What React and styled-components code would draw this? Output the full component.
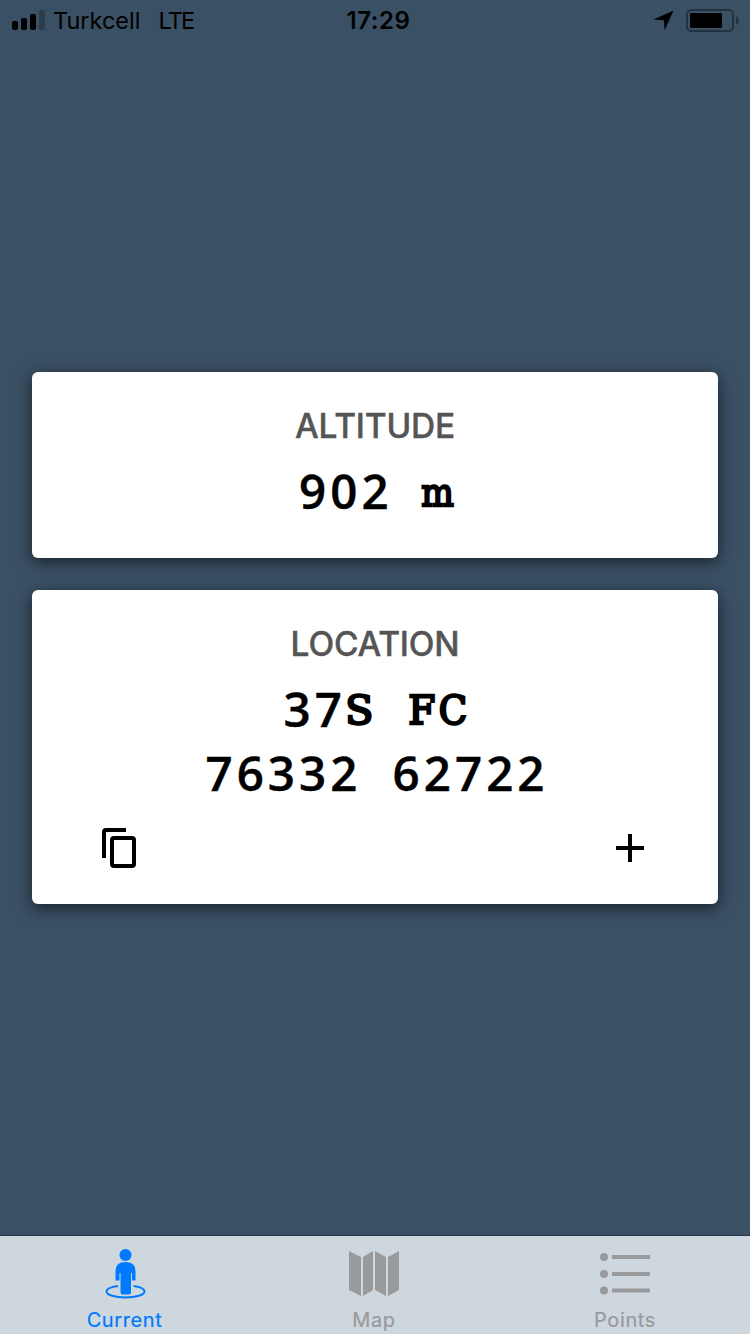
import React from "react";
import styled, { createGlobalStyle } from "styled-components";

const GlobalStyle = createGlobalStyle`
  *, *::before, *::after { box-sizing: border-box; }
  body { margin: 0; background: #3a5064; }
`;

const Screen = styled.div`
  display: flex;
  flex-direction: column;
  width: 750px;
  height: 1334px;
  overflow: hidden;
  background: #3a5064;
  font-family: Inter, "Liberation Sans", sans-serif;
  color: #000;
`;

const StatusBar = styled.header`
  display: grid;
  grid-template-columns: 1fr auto 1fr;
  align-items: center;
  height: 40px;
  padding: 0 11px 0 12px;
  font-size: 24px;
  line-height: 36px;
`;

const StatusGroup = styled.div`
  display: flex;
  align-items: center;
  justify-content: ${(p) => (p.$end ? "flex-end" : "flex-start")};
  gap: ${(p) => p.$gap};
  height: 40px;
`;

const StatusText = styled.span`
  padding-top: 2px;
  font-size: 23.5px;
  font-weight: 400;
  letter-spacing: ${(p) => p.$spacing || "0"};
  margin-left: ${(p) => p.$indent || "0"};
`;

const Clock = styled.time`
  font-weight: 600;
  letter-spacing: 0.6px;
  padding: 2px 0 0 6px;
`;

const Main = styled.main`
  flex: 1;
  display: flex;
  flex-direction: column;
  justify-content: center;
  gap: 32px;
  padding: 0 32px;
`;

const Card = styled.section`
  display: flex;
  flex-direction: column;
  align-items: center;
  height: ${(p) => p.$height};
  padding-top: 33px;
  border-radius: 6px;
  background: #fff;
  box-shadow: 0 4px 16px rgba(0, 0, 0, 0.6);
`;

const CardTitle = styled.h2`
  margin: 0 0 14px;
  font-size: 33.5px;
  line-height: 42px;
  font-weight: 500;
  letter-spacing: -0.2px;
  color: #555;
  -webkit-text-stroke: 0.4px #555;
`;

const Value = styled.p`
  display: flex;
  height: 64px;
  margin: 0;
  line-height: 64px;
`;

const Digit = styled.span`
  width: 31.2px;
  height: 64px;
  text-align: center;
  font-family: "Open Sans", sans-serif;
  font-weight: 600;
  font-size: 47.5px;
  line-height: 59px;
  -webkit-text-stroke: 0.4px #000;
`;

const Slab = styled.span`
  display: flex;
  justify-content: center;
  width: 31.2px;
  font-family: "DejaVu Serif", serif;
  font-size: 39px;
  -webkit-text-stroke: 2.4px #000;
`;

const SlabGlyph = styled.span`
  transform: scaleX(${(p) => p.$scale});
`;

const Actions = styled.div`
  display: flex;
  justify-content: space-between;
  align-self: stretch;
  margin-top: 19px;
  padding: 0 68px 0 67px;
`;

const IconButton = styled.button`
  display: flex;
  align-items: center;
  justify-content: center;
  width: 40px;
  height: 44px;
  padding: 0;
  border: 0;
  background: none;
  color: #000;
`;

const TabBar = styled.nav`
  display: grid;
  grid-template-columns: repeat(3, 1fr);
  height: 99px;
  border-top: 1px solid #26384a;
  background: #ced6de;
`;

const Tab = styled.a`
  display: flex;
  flex-direction: column;
  align-items: center;
  padding: 12px ${(p) => p.$shift || "0px"} 0 0;
  color: ${(p) => (p.$active ? "#007aff" : "#999a9c")};
  font-size: 20px;
  line-height: 24px;
  font-weight: 400;
  -webkit-text-stroke: 0.2px currentColor;
  letter-spacing: ${(p) => p.$spacing};
`;

const TabIcon = styled.svg`
  display: block;
  width: 52px;
  height: 52px;
  margin-bottom: 8px;
`;

const slabScale = { m: 0.88, S: 1.05, F: 1, C: 0.95 };

function Reading({ children }) {
  return (
    <Value>
      {[...children].map((c, i) =>
        slabScale[c] ? (
          <Slab key={i}>
            <SlabGlyph $scale={slabScale[c]}>{c}</SlabGlyph>
          </Slab>
        ) : (
          <Digit key={i}>{c}</Digit>
        )
      )}
    </Value>
  );
}

export default function App() {
  return (
    <>
      <GlobalStyle />
      <Screen>
        <StatusBar>
          <StatusGroup $gap="8px">
            <svg width="33" height="20" viewBox="0 0 33 20">
              <rect x="0" y="11" width="6" height="9" rx="2" />
              <rect x="9" y="8" width="6" height="12" rx="2" />
              <rect x="18" y="4" width="6" height="16" rx="2" />
              <rect x="27" y="0" width="6" height="20" rx="2" opacity="0.25" />
            </svg>
            <StatusText>Turkcell</StatusText>
            <StatusText $spacing="-1.8px" $indent="10px">LTE</StatusText>
          </StatusGroup>
          <Clock>17:29</Clock>
          <StatusGroup $end $gap="12px">
            <svg width="21" height="21" viewBox="0 0 21 21">
              <path d="M20.5 0.5L11.5 20.5L11 10.2L0.5 9.4Z" />
            </svg>
            <svg width="53" height="23" viewBox="0 0 53 23">
              <rect x="1" y="1" width="46" height="21" rx="4.5" fill="none" stroke="#24323f" strokeWidth="2" />
              <rect x="4" y="4" width="32" height="15" rx="1" />
              <path d="M50 7.5Q53 8.5 53 11.5T50 15.5Z" fill="#24323f" />
            </svg>
          </StatusGroup>
        </StatusBar>

        <Main>
          <Card $height="186px">
            <CardTitle>ALTITUDE</CardTitle>
            <Reading>902 m</Reading>
          </Card>
          <Card $height="314px">
            <CardTitle>LOCATION</CardTitle>
            <Reading>37S FC</Reading>
            <Reading>76332 62722</Reading>
            <Actions>
              <IconButton aria-label="Copy">
                <svg width="34" height="40" viewBox="0 0 34 40" fill="none" stroke="currentColor" strokeWidth="4">
                  <path d="M24 2H4Q2 2 2 4V30" />
                  <rect x="10" y="10" width="22" height="28" rx="2" />
                </svg>
              </IconButton>
              <IconButton aria-label="Add">
                <svg width="28" height="28" viewBox="0 0 28 28" stroke="currentColor" strokeWidth="4">
                  <path d="M14 0V28M0 14H28" />
                </svg>
              </IconButton>
            </Actions>
          </Card>
        </Main>

        <TabBar>
          <Tab $active $spacing="0.6px" $shift="1px">
            <TabIcon viewBox="0 0 52 52" fill="currentColor">
              <circle cx="26.5" cy="7" r="6" />
              <path d="M16.5 23Q16.5 14 26.5 14T36.500 23V32.500H33V25H32V44Q32 46.500 29.500 46.500H23.500Q21.500 46.500 21.500 44V25H20.500V32.500H16.500Z" />
              <path d="M19 38C11 39 7.500 41 7.500 43.500C7.500 47 16 49.500 26.500 49.500S45.500 47 45.500 43.500C45.500 41 42 39 34.500 38" fill="none" stroke="currentColor" strokeWidth="2" />
            </TabIcon>
            Current
          </Tab>
          <Tab $spacing="0.6px" $shift="2px">
            <TabIcon viewBox="0 0 52 52" fill="currentColor">
              <path d="M1 3L13 9V48L1 42ZM15 9L25 3V42L15 48ZM27 3L38 9V48L27 42ZM40 9L51 3V42L40 48Z" />
            </TabIcon>
            Map
          </Tab>
          <Tab $spacing="0.6px">
            <TabIcon viewBox="0 0 52 52" fill="currentColor">
              <circle cx="5" cy="9" r="4" />
              <circle cx="5" cy="26" r="4" />
              <circle cx="5" cy="42.500" r="4" />
              <path d="M13 7H51V11H13ZM13 24H51V28H13ZM13 40.500H51V44.500H13Z" />
            </TabIcon>
            Points
          </Tab>
        </TabBar>
      </Screen>
    </>
  );
}
